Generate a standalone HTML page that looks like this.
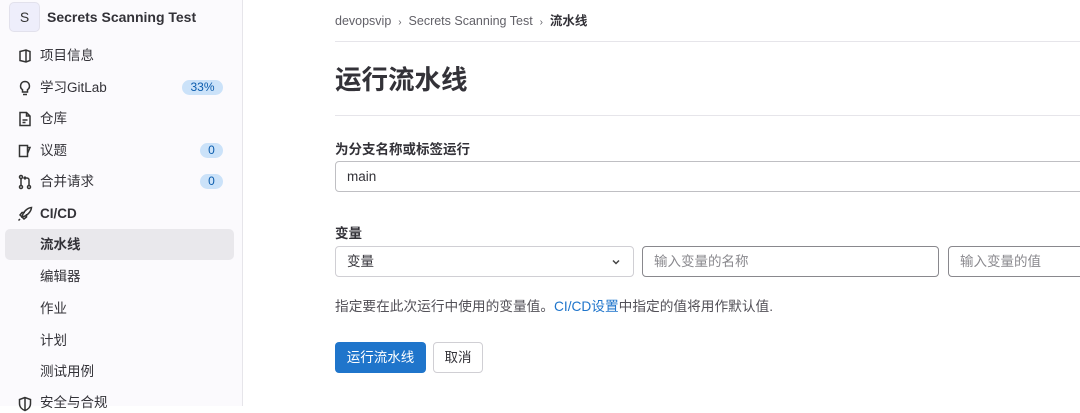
<!DOCTYPE html>
<html><head><meta charset="utf-8"><style>
*{box-sizing:border-box;margin:0;padding:0}
body{width:1080px;height:406px;overflow:hidden;background:#fff;font-family:"Liberation Sans","Noto Sans CJK SC",sans-serif;color:#333238;position:relative}
.sb{position:absolute;left:0;top:0;width:243px;height:406px;background:#fbfafd;border-right:1px solid #e6e5ea}
.av{position:absolute;left:9px;top:2px;width:31px;height:30px;border-radius:5px;background:#eeeefb;border:1px solid #e2e1ec;font-size:14px;text-align:center;line-height:28px;color:#333}
.pt{position:absolute;left:47px;top:9px;font-size:14px;font-weight:bold;color:#333238}
.it{position:absolute;left:40px;font-size:13.5px;height:20px;line-height:20px;color:#333238}
.ic{position:absolute;left:17px;width:16px;height:16px}
.bd{position:absolute;height:15px;border-radius:8px;background:#cbe2f9;color:#0b5cad;font-size:12px;line-height:15px;text-align:center}
.act{position:absolute;left:5px;top:229px;width:229px;height:31px;background:#e9e8ec;border-radius:5px}
.m{position:absolute;left:335px}
.hr{position:absolute;left:335px;right:0;height:1px;background:#e6e5ea}
.inp{position:absolute;height:31px;border:1px solid #89888d;border-radius:4px;font-size:13.5px;line-height:29px;padding-left:11px;background:#fff}
</style></head><body>
<div class="sb">
<div class="av">S</div><div class="pt">Secrets Scanning Test</div>
<svg class="ic" style="top:48px" viewBox="0 0 16 16" fill="none" stroke="#333" stroke-width="1.5"><path d="M3 3.5 L9 2 L13 3.5 V12.5 L9 14 L3 12.5Z M9 2V14"/></svg>
<div class="it" style="top:46px">项目信息</div>
<svg class="ic" style="top:80px" viewBox="0 0 16 16" fill="none" stroke="#333" stroke-width="1.5"><path d="M8 1.5a4.5 4.5 0 0 0-2.5 8.2V12h5V9.7A4.5 4.5 0 0 0 8 1.5Z M6 14.5h4"/></svg>
<div class="it" style="top:78px">学习GitLab</div>
<div class="bd" style="left:182px;top:80px;width:41px">33%</div>
<svg class="ic" style="top:111px" viewBox="0 0 16 16" fill="none" stroke="#333" stroke-width="1.5"><path d="M3 1.5h6.5L13 5v9.5H3Z M9.5 1.5V5H13 M5.5 9h5 M5.5 11.5h3"/></svg>
<div class="it" style="top:109px">仓库</div>
<svg class="ic" style="top:143px" viewBox="0 0 16 16" fill="none" stroke="#333" stroke-width="1.5"><path d="M2.5 2.5h8v11h-8Z M10.5 4.5h2.5l-2.5 6"/></svg>
<div class="it" style="top:141px">议题</div>
<div class="bd" style="left:200px;top:143px;width:23px">0</div>
<svg class="ic" style="top:174px" viewBox="0 0 16 16" fill="none" stroke="#333" stroke-width="1.5"><circle cx="4" cy="3" r="1.5"/><circle cx="4" cy="13" r="1.5"/><circle cx="12" cy="13" r="1.5"/><path d="M4 4.5v7 M12 11.5V6a2 2 0 0 0-2-2H7 M8.5 2.5 7 4l1.5 1.5"/></svg>
<div class="it" style="top:172px">合并请求</div>
<div class="bd" style="left:200px;top:174px;width:23px">0</div>
<svg class="ic" style="top:206px" viewBox="0 0 16 16" fill="none" stroke="#333" stroke-width="1.5"><path d="M5 11 C6 6 10 2 14.5 1.5 C14 6 10 10 5 11Z M5 11 3 9 5 6.5h3 M5 11l2 2 2.5-2V8 M3 13l-1.5 1.5"/></svg>
<div class="it" style="top:204px;font-weight:bold">CI/CD</div>
<div class="act"></div>
<div class="it" style="top:235px;font-weight:bold">流水线</div>
<div class="it" style="top:267px">编辑器</div>
<div class="it" style="top:299px">作业</div>
<div class="it" style="top:331px">计划</div>
<div class="it" style="top:362px">测试用例</div>
<svg class="ic" style="top:396px" viewBox="0 0 16 16" fill="none" stroke="#333" stroke-width="1.5"><path d="M8 1.5 2.5 3.5v4c0 3.5 2.5 6 5.5 7 3-1 5.5-3.5 5.5-7v-4Z M8 1.5v13"/></svg>
<div class="it" style="top:393px">安全与合规</div>
</div>

<div class="m" style="top:10px;font-size:12.5px;color:#626168">devopsvip&nbsp;&nbsp;<span style="font-size:10px">›</span>&nbsp;&nbsp;Secrets Scanning Test&nbsp;&nbsp;<span style="font-size:10px">›</span>&nbsp;&nbsp;<b style="color:#333238">流水线</b></div>
<div class="hr" style="top:41px"></div>
<div class="m" style="top:58px;font-size:26.5px;font-weight:bold;color:#333238">运行流水线</div>
<div class="hr" style="top:115px"></div>
<div class="m" style="top:138px;font-size:13.5px;font-weight:bold">为分支名称或标签运行</div>
<div class="inp" style="left:335px;top:161px;width:760px;border-color:#bfbfc3;line-height:30px">main</div>
<div class="m" style="top:222px;font-size:13.5px;font-weight:bold">变量</div>
<div class="inp" style="left:335px;top:246px;width:299px;border-color:#d0cfd4;line-height:30px">变量<svg style="position:absolute;right:12px;top:11px" width="10" height="8" viewBox="0 0 10 8" fill="none" stroke="#444" stroke-width="1.5"><path d="M2 2.5 5 5.5 8 2.5"/></svg></div>
<div class="inp" style="left:642px;top:246px;width:297px;color:#89888d;line-height:30px">输入变量的名称</div>
<div class="inp" style="left:948px;top:246px;width:150px;color:#89888d;line-height:30px">输入变量的值</div>
<div class="m" style="top:295px;font-size:13.7px;color:#535158">指定要在此次运行中使用的变量值。<span style="color:#1f75cb">CI/CD设置</span>中指定的值将用作默认值.</div>
<div style="position:absolute;left:335px;top:342px;width:91px;height:31px;background:#1f75cb;border-radius:4px;color:#fff;font-size:13.5px;line-height:31px;text-align:center">运行流水线</div>
<div style="position:absolute;left:433px;top:342px;width:50px;height:31px;border:1px solid #d0cfd4;border-radius:4px;color:#333238;font-size:13.5px;line-height:29px;text-align:center">取消</div>
</body></html>
